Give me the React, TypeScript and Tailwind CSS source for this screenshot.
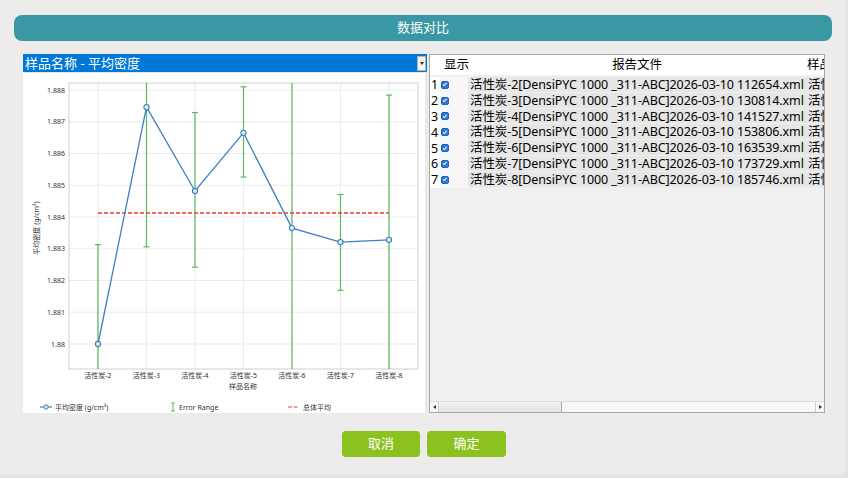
import React from 'react';

const FONT = '"Noto Sans", "Noto Sans CJK SC", sans-serif';

const samples = [
  { name: '活性炭-2', value: 1.88, lo: 1.8753, hi: 1.88313 },
  { name: '活性炭-3', value: 1.88746, lo: 1.88306, hi: 1.8905 },
  { name: '活性炭-4', value: 1.88482, lo: 1.88242, hi: 1.88729 },
  { name: '活性炭-5', value: 1.88665, lo: 1.88526, hi: 1.8881 },
  { name: '活性炭-6', value: 1.88365, lo: 1.875, hi: 1.8905 },
  { name: '活性炭-7', value: 1.88321, lo: 1.88169, hi: 1.88471 },
  { name: '活性炭-8', value: 1.88328, lo: 1.875, hi: 1.88784 },
];

const files = [
  '112654', '130814', '141527', '153806', '163539', '173729', '185746',
];

const PLOT = { left: 46, top: 10, right: 395, bottom: 296 };
const yOf = (v: number) => Math.min(PLOT.bottom, Math.max(PLOT.top, 17 + (1.888 - v) * 31750));
const xOf = (i: number) => 75 + i * 48.5;
const ticks = ['1.888', '1.887', '1.886', '1.885', '1.884', '1.883', '1.882', '1.881', '1.88'];

function Chart() {
  const avgY = 140;
  const linePts = samples.map((s, i) => `${xOf(i)},${yOf(s.value)}`).join(' ');
  return (
    <svg width="402" height="340" viewBox="0 0 402 340" style={{ fontFamily: FONT }}>
      <rect x="0" y="0" width="402" height="340" fill="#ffffff" />
      {/* grid */}
      {ticks.map((t, i) => (
        <line key={t} x1={PLOT.left} x2={PLOT.right} y1={17 + i * 31.75} y2={17 + i * 31.75} stroke="#ebebeb" strokeWidth="1" />
      ))}
      {samples.map((s, i) => (
        <line key={s.name} x1={xOf(i)} x2={xOf(i)} y1={PLOT.top} y2={PLOT.bottom} stroke="#ebebeb" strokeWidth="1" />
      ))}
      <rect x={PLOT.left} y={PLOT.top} width={PLOT.right - PLOT.left} height={PLOT.bottom - PLOT.top} fill="none" stroke="#cfcfcf" strokeWidth="1" />
      {/* y ticks */}
      {ticks.map((t, i) => (
        <text key={t} x="42" y={17 + i * 31.75 + 2.5} fontSize="7" textAnchor="end" fill="#333">{t}</text>
      ))}
      <text x="0" y="0" fontSize="7" fill="#333" textAnchor="middle" transform="translate(16,155) rotate(-90)">平均密度 (g/cm³)</text>
      {/* x labels */}
      {samples.map((s, i) => (
        <text key={s.name} x={xOf(i)} y="305" fontSize="7" textAnchor="middle" fill="#333">{s.name}</text>
      ))}
      <text x="220" y="316" fontSize="7" textAnchor="middle" fill="#333">样品名称</text>
      {/* error bars */}
      {samples.map((s, i) => {
        const x = xOf(i);
        const top = yOf(s.hi);
        const bot = yOf(s.lo);
        return (
          <g key={s.name} stroke="#5cb85c" strokeWidth="1.2">
            <line x1={x} x2={x} y1={top} y2={bot} />
            {top > PLOT.top && <line x1={x - 3} x2={x + 3} y1={top} y2={top} />}
            {bot < PLOT.bottom && <line x1={x - 3} x2={x + 3} y1={bot} y2={bot} />}
          </g>
        );
      })}
      {/* average */}
      <line x1={xOf(0)} x2={xOf(6)} y1={avgY} y2={avgY} stroke="#e8413a" strokeWidth="1.5" strokeDasharray="4 2" />
      {/* series */}
      <polyline points={linePts} fill="none" stroke="#3d7fbf" strokeWidth="1.3" />
      {samples.map((s, i) => (
        <circle key={s.name} cx={xOf(i)} cy={yOf(s.value)} r="2.6" fill="#dceaf6" stroke="#3d7fbf" strokeWidth="1.1" />
      ))}
      {/* legend */}
      <line x1="17" x2="29" y1="334" y2="334" stroke="#3d7fbf" strokeWidth="1.2" />
      <circle cx="23" cy="334" r="2.2" fill="#dceaf6" stroke="#3d7fbf" strokeWidth="1" />
      <text x="32" y="336.5" fontSize="7" fill="#333">平均密度 (g/cm³)</text>
      <g stroke="#5cb85c" strokeWidth="1">
        <line x1="150" x2="150" y1="330" y2="338" />
        <line x1="148" x2="152" y1="330" y2="330" />
        <line x1="148" x2="152" y1="338" y2="338" />
      </g>
      <text x="156" y="336.5" fontSize="7" fill="#333">Error Range</text>
      <line x1="265" x2="276" y1="334" y2="334" stroke="#e8413a" strokeWidth="1.2" strokeDasharray="4 1.5" />
      <text x="280" y="336.5" fontSize="7" fill="#333">总体平均</text>
    </svg>
  );
}

function Check() {
  return (
    <span className="inline-block w-[8px] h-[8px] rounded-[2px] bg-[#2f78da] border border-[#2163bd] relative">
      <span className="absolute left-[1px] top-[1.5px] w-[4px] h-[2px] border-l border-b border-white -rotate-45" />
    </span>
  );
}

export default function App() {
  return (
    <div className="w-[848px] h-[478px] bg-[#e6e4e2] overflow-hidden" style={{ fontFamily: FONT }}>
      <div className="w-[846px] h-[475px] bg-[#eeecea] rounded-br-[8px] flex flex-col">
        {/* Title */}
        <div className="mx-[14px] mt-[15px] h-[26px] rounded-[8px] bg-[#3a97a4] flex items-center justify-center text-white text-[13px]">
          数据对比
        </div>

        {/* Content */}
        <div className="mt-[13px] ml-[23px] mr-[21px] h-[359px] flex gap-[2px]">
          {/* Left panel */}
          <div className="w-[404px] flex flex-col bg-[#e9e9e9]">
            <div className="h-[19px] bg-[#0078d7] flex items-center justify-between text-white text-[13px] leading-none">
              <span className="pl-[2px]">样品名称 - 平均密度</span>
              <span className="w-[9px] h-[15px] mr-[1px] bg-[#f2f2f2] border border-[#b5b5b5] flex items-center justify-center">
                <span className="w-0 h-0 border-l-[2px] border-r-[2px] border-t-[3px] border-l-transparent border-r-transparent border-t-[#333]" />
              </span>
            </div>
            <div className="mt-[1px] w-[402px] h-[340px] bg-white">
              <Chart />
            </div>
          </div>

          {/* Right panel */}
          <div className="flex-1 border border-[#a8a8a8] bg-[#f0f0f0] flex flex-col text-[12.5px] tracking-[-0.1px] text-black overflow-hidden">
            <div className="h-[20px] bg-white flex items-center leading-none whitespace-nowrap">
              <span className="w-[38px] pl-[14px] shrink-0">显示</span>
              <span className="w-[338px] text-center shrink-0">报告文件</span>
              <span className="pl-[1px]">样品</span>
            </div>
            <div className="mt-[2px] flex flex-col">
              {files.map((f, i) => (
                <div key={f} className="h-[15.8px] flex items-center whitespace-nowrap leading-[15px]">
                  <span className="w-[10px] pl-[1px] shrink-0 bg-white h-full flex items-center">{i + 1}</span>
                  <span className="w-[28px] shrink-0 bg-[#f7f7f7] h-full flex items-center pl-[1px]">
                    <Check />
                  </span>
                  <span className="w-[338px] shrink-0 bg-[#e6e6e6] h-full flex items-center pl-[2px] border-b border-[#efefef]">
                    活性炭-{i + 2}[DensiPYC 1000 _311-ABC]2026-03-10 {f}.xml
                  </span>
                  <span className="bg-[#e6e6e6] h-full flex items-center pl-[2px] flex-1 overflow-hidden border-b border-[#efefef]">活性</span>
                </div>
              ))}
            </div>
            <div className="flex-1" />
            {/* horizontal scrollbar */}
            <div className="h-[11px] flex items-stretch bg-[#f8f8f8] border-t border-[#dcdcdc]">
              <span className="w-[9px] flex items-center justify-center border-r border-[#cfcfcf]">
                <span className="w-0 h-0 border-t-[2px] border-b-[2px] border-r-[3px] border-t-transparent border-b-transparent border-r-[#333]" />
              </span>
              <span className="w-[123px] bg-gradient-to-b from-[#f4f4f4] to-[#e2e2e2] border-r border-[#a8a8a8]" />
              <span className="flex-1" />
              <span className="w-[9px] flex items-center justify-center border-l border-[#cfcfcf]">
                <span className="w-0 h-0 border-t-[2px] border-b-[2px] border-l-[3px] border-t-transparent border-b-transparent border-l-[#333]" />
              </span>
            </div>
          </div>
        </div>

        {/* Buttons */}
        <div className="mt-[18px] flex justify-center gap-[7px] pl-[2px]">
          <button className="w-[78px] h-[26px] rounded-[4px] bg-[#8cc21f] text-white text-[13px]">取消</button>
          <button className="w-[79px] h-[26px] rounded-[4px] bg-[#8cc21f] text-white text-[13px]">确定</button>
        </div>
      </div>
    </div>
  );
}
